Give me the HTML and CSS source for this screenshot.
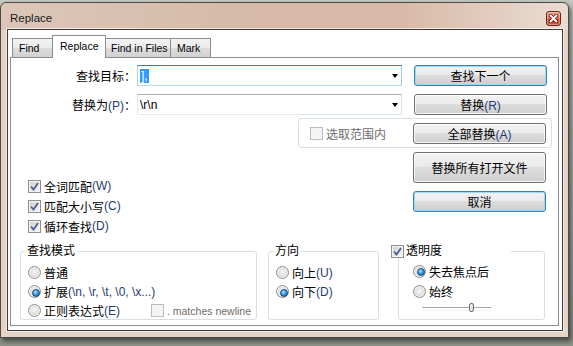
FILE: index.html
```html
<!DOCTYPE html>
<html lang="zh-CN">
<head>
    <meta charset="UTF-8">
    <title>Replace</title>
    <link rel="stylesheet" href="styles.css">
</head>
<body>
    <div class="window">
        <div class="titlebar">
            <span class="title">Replace</span>
            <span class="close-btn">
                <svg width="9" height="9" viewBox="0 0 9 9">
                    <path d="M1.5 1.5 L7.5 7.5 M7.5 1.5 L1.5 7.5" stroke="#5a1a10" stroke-width="3.2" stroke-linecap="round"/>
                    <path d="M1.5 1.5 L7.5 7.5 M7.5 1.5 L1.5 7.5" stroke="#fff" stroke-width="1.8" stroke-linecap="round"/>
                </svg>
            </span>
        </div>
        <div class="client">
            <div class="tabs">
                <div class="tab tab-find">Find</div>
                <div class="tab tab-replace active">Replace</div>
                <div class="tab tab-files">Find in Files</div>
                <div class="tab tab-mark">Mark</div>
            </div>
            <div class="panel">
                <div class="field-row">
                    <label class="field-label">查找目标：</label>
                    <div class="combo focused"><span class="combo-text"><span class="selected">],</span></span><span class="arrow"></span></div>
                    <button class="btn default">查找下一个</button>
                </div>
                <div class="field-row second">
                    <label class="field-label">替换为<span class="key">(P)</span>：</label>
                    <div class="combo"><span class="combo-text">\r\n</span><span class="arrow"></span></div>
                    <button class="btn">替换<span class="key">(R)</span></button>
                </div>
                <div class="scope-box">
                    <span class="option disabled scope-check"><span class="check"></span>选取范围内</span>
                    <button class="btn">全部替换<span class="key">(A)</span></button>
                </div>
                <div class="middle">
                    <div class="options">
                        <div class="option"><span class="check on"><svg width="11" height="11" viewBox="0 0 11 11"><path d="M2 5.5 L4.5 8.5 L9 2" fill="none" stroke="#4b5f95" stroke-width="1.8"/></svg></span>全词匹配<span class="key">(W)</span></div>
                        <div class="option"><span class="check on"><svg width="11" height="11" viewBox="0 0 11 11"><path d="M2 5.5 L4.5 8.5 L9 2" fill="none" stroke="#4b5f95" stroke-width="1.8"/></svg></span>匹配大小写<span class="key">(C)</span></div>
                        <div class="option"><span class="check on"><svg width="11" height="11" viewBox="0 0 11 11"><path d="M2 5.5 L4.5 8.5 L9 2" fill="none" stroke="#4b5f95" stroke-width="1.8"/></svg></span>循环查找<span class="key">(D)</span></div>
                    </div>
                    <div class="side-buttons">
                        <button class="btn tall">替换所有打开文件</button>
                        <button class="btn default">取消</button>
                    </div>
                </div>
                <div class="groups">
                    <div class="group group-mode">
                        <div class="group-title">查找模式</div>
                        <div class="option"><span class="radio"></span>普通</div>
                        <div class="option"><span class="radio on"></span>扩展 <span class="key">(\n, \r, \t, \0, \x...)</span></div>
                        <div class="option"><span class="radio"></span>正则表达式<span class="key">(E)</span>
                            <span class="option disabled newline"><span class="check"></span>. matches newline</span>
                        </div>
                    </div>
                    <div class="group group-dir">
                        <div class="group-title">方向</div>
                        <div class="option"><span class="radio"></span>向上<span class="key">(U)</span></div>
                        <div class="option"><span class="radio on"></span>向下<span class="key">(D)</span></div>
                    </div>
                    <div class="group group-alpha">
                        <div class="group-title alpha-title"><span class="check on"><svg width="11" height="11" viewBox="0 0 11 11"><path d="M2 5.5 L4.5 8.5 L9 2" fill="none" stroke="#4b5f95" stroke-width="1.8"/></svg></span>透明度</div>
                        <div class="option row20"><span class="radio on"></span>失去焦点后</div>
                        <div class="option row20"><span class="radio"></span>始终</div>
                        <div class="slider"><span class="thumb"></span></div>
                    </div>
                </div>
            </div>
        </div>
    </div>
</body>
</html>
```

FILE: styles.css
```css
* {
    box-sizing: border-box;
}
body {
    margin: 0;
    height: 346px;
    overflow: hidden;
    background: linear-gradient(#c3c7bf, #8d9189);
    font-family: "Liberation Sans", "Noto Sans CJK SC", sans-serif;
    font-size: 12px;
    color: #000;
}
.window {
    width: 569px;
    height: 336px;
    margin-top: 2px;
    padding: 0 5px 6px 6px;
    border: 1px solid #4b4b4b;
    border-radius: 6px 6px 0 0;
    background:
        linear-gradient(to bottom, transparent 27px, #e6d3c5 27px),
        linear-gradient(to right, #dbc7b9 0%, #d6b9a7 45%, #d8b9a7 70%, #eadcd2 100%);
    box-shadow: 2px 3px 5px rgba(0, 0, 0, 0.55);
}
.titlebar {
    display: flex;
    align-items: center;
    height: 26px;
    padding: 4px 2px 0 3px;
}
.title {
    flex: 1;
    font-size: 11.5px;
    color: #1a1a1a;
}
.close-btn {
    width: 15px;
    height: 15px;
    display: flex;
    align-items: center;
    justify-content: center;
    border: 1px solid #6b2318;
    border-radius: 3px;
    background: linear-gradient(#eba393, #d9694f 50%, #c43c1e 51%, #d1573a);
    box-shadow: inset 0 0 0 1px rgba(255, 255, 255, 0.35);
}
.client {
    height: 302px;
    border: 1px solid #3c3c3c;
    background: #fff;
    box-shadow: 0 0 0 1px rgba(255, 255, 255, 0.6);
}

/* tabs */
.tabs {
    display: flex;
    align-items: flex-end;
    height: 27px;
    padding-left: 4px;
}
.tab {
    height: 19px;
    margin-right: -1px;
    padding: 2px 0 0 6px;
    border: 1px solid #898c95;
    border-bottom: none;
    background: linear-gradient(#f3f3f3, #ebebeb 50%, #dddddd 50%, #d2d2d2);
    font-size: 10.5px;
    line-height: 14px;
    white-space: nowrap;
}
.tab.active {
    height: 23px;
    margin-bottom: -1px;
    padding-top: 3px;
    padding-left: 7px;
    background: #fff;
    position: relative;
    z-index: 1;
}
.tab-find { width: 41px; }
.tab-replace { width: 54px; }
.tab-files { width: 66px; padding-left: 5px; }
.tab-mark { width: 41px; }

.panel {
    height: 269px;
    margin: 0 3px 0 2px;
    padding-top: 7px;
    border: 1px solid #898c95;
    background: #fff;
}

/* find / replace fields */
.field-row {
    display: flex;
    align-items: center;
    height: 21px;
}
.field-row.second {
    margin-top: 8px;
}
.field-label {
    width: 125px;
    text-align: right;
    white-space: nowrap;
}
.combo {
    display: flex;
    align-items: center;
    width: 265px;
    height: 21px;
    margin-left: 1px;
    padding-left: 2px;
    border: 1px solid;
    border-color: #abadb3 #dbdfe6 #e3e9ef #e2e3ea;
}
.combo.focused {
    border-color: #3d7bad #a4c9e3 #b7d9ed #b5cfe7;
}
.combo-text {
    flex: 1;
}
.selected {
    background: #3399ff;
    color: #fff;
    padding: 0 1px;
}
.arrow {
    width: 0;
    height: 0;
    margin-right: 3px;
    border-left: 3.5px solid transparent;
    border-right: 3.5px solid transparent;
    border-top: 4px solid #000;
}
.key {
    color: #1f3a72;
}

/* buttons */
.btn {
    width: 133px;
    height: 21px;
    padding: 0;
    font: inherit;
    color: #000;
    border: 1px solid #707070;
    border-radius: 3px;
    background: linear-gradient(#f2f2f2, #ebebeb 45%, #dddddd 50%, #cfcfcf);
    box-shadow: inset 0 0 0 1px rgba(255, 255, 255, 0.8);
}
.field-row .btn {
    margin-left: 12px;
}
.btn.default {
    border-color: #3c7fb1;
    box-shadow: inset 0 0 0 1px #97dbf7;
}
.btn.tall {
    height: 31px;
}

.scope-box {
    display: flex;
    align-items: center;
    width: 254px;
    height: 30px;
    margin: 3px 0 0 287px;
    padding-left: 11px;
    border: 1px solid #d5dfe5;
    border-radius: 3px;
}
.scope-check {
    width: 103px;
}

.middle {
    display: flex;
    justify-content: space-between;
    margin-top: 4px;
}
.options {
    padding: 24px 0 0 17px;
}
.options .option {
    height: 20px;
}
.side-buttons {
    display: flex;
    flex-direction: column;
    gap: 8px;
    margin-right: 12px;
}

/* check boxes and radios */
.option {
    display: flex;
    align-items: center;
    height: 19px;
    white-space: nowrap;
}
.check {
    width: 13px;
    height: 13px;
    flex: none;
    margin-right: 3px;
    display: flex;
    align-items: center;
    justify-content: center;
    border: 1px solid #8e8f8f;
    background: linear-gradient(135deg, #cfcfcf 0%, #f7f7f7 100%);
    box-shadow: inset 0 0 0 1px #f4f4f4;
}
.option.disabled {
    color: #6d6d6d;
}
.option.disabled .check {
    border-color: #bcbcbc;
    background: #f4f4f4;
    box-shadow: none;
}
.radio {
    width: 13px;
    height: 13px;
    flex: none;
    margin-right: 3px;
    border: 1px solid #8e8f8f;
    border-radius: 50%;
    background: radial-gradient(circle at 50% 45%, #f6f6f6 0%, #dedede 55%, #c4c4c4 100%);
    box-shadow: inset 0 0 0 1px #f2f2f2;
    position: relative;
}
.radio.on::after {
    content: '';
    position: absolute;
    left: 2.5px;
    top: 2.5px;
    width: 6px;
    height: 6px;
    border-radius: 50%;
    border: 1px solid #1a4f86;
    background: radial-gradient(circle at 40% 35%, #b6e6ff 0%, #3a9be0 45%, #115596 100%);
}

/* group boxes */
.groups {
    display: flex;
    margin-top: 15px;
    padding-left: 9px;
}
.group {
    position: relative;
    height: 69px;
    border: 1px solid #d5dfe5;
    border-radius: 3px;
}
.group-title {
    position: absolute;
    top: -8px;
    left: 4px;
    padding: 0 2px;
    line-height: 14px;
    background: #fff;
}
.group-mode {
    width: 237px;
    padding: 11px 0 0 7px;
}
.group-dir {
    width: 111px;
    margin-left: 11px;
    padding: 11px 0 0 7px;
}
.group-alpha {
    width: 147px;
    margin-left: 19px;
    padding: 9px 0 0 14px;
}
.alpha-title {
    display: flex;
    align-items: center;
    left: -8px;
    width: 120px;
    padding: 0;
}
.alpha-title .check {
    margin-right: 2px;
}
.row20 {
    height: 20px;
}
.newline {
    margin-left: auto;
    margin-right: 5px;
    font-size: 10.5px;
}
.slider {
    position: relative;
    width: 69px;
    height: 9px;
    margin: 2px 0 0 9px;
}
.slider::before {
    content: '';
    position: absolute;
    left: 0;
    right: 0;
    top: 4px;
    height: 2px;
    border-top: 1px solid #a7a7a7;
    border-bottom: 1px solid #f2f2f2;
}
.thumb {
    position: absolute;
    left: 47px;
    top: 0;
    width: 5px;
    height: 9px;
    border: 1px solid #6f6f6f;
    border-radius: 2px;
    background: linear-gradient(to right, #f7f7f7, #d6d6d6);
}
```
